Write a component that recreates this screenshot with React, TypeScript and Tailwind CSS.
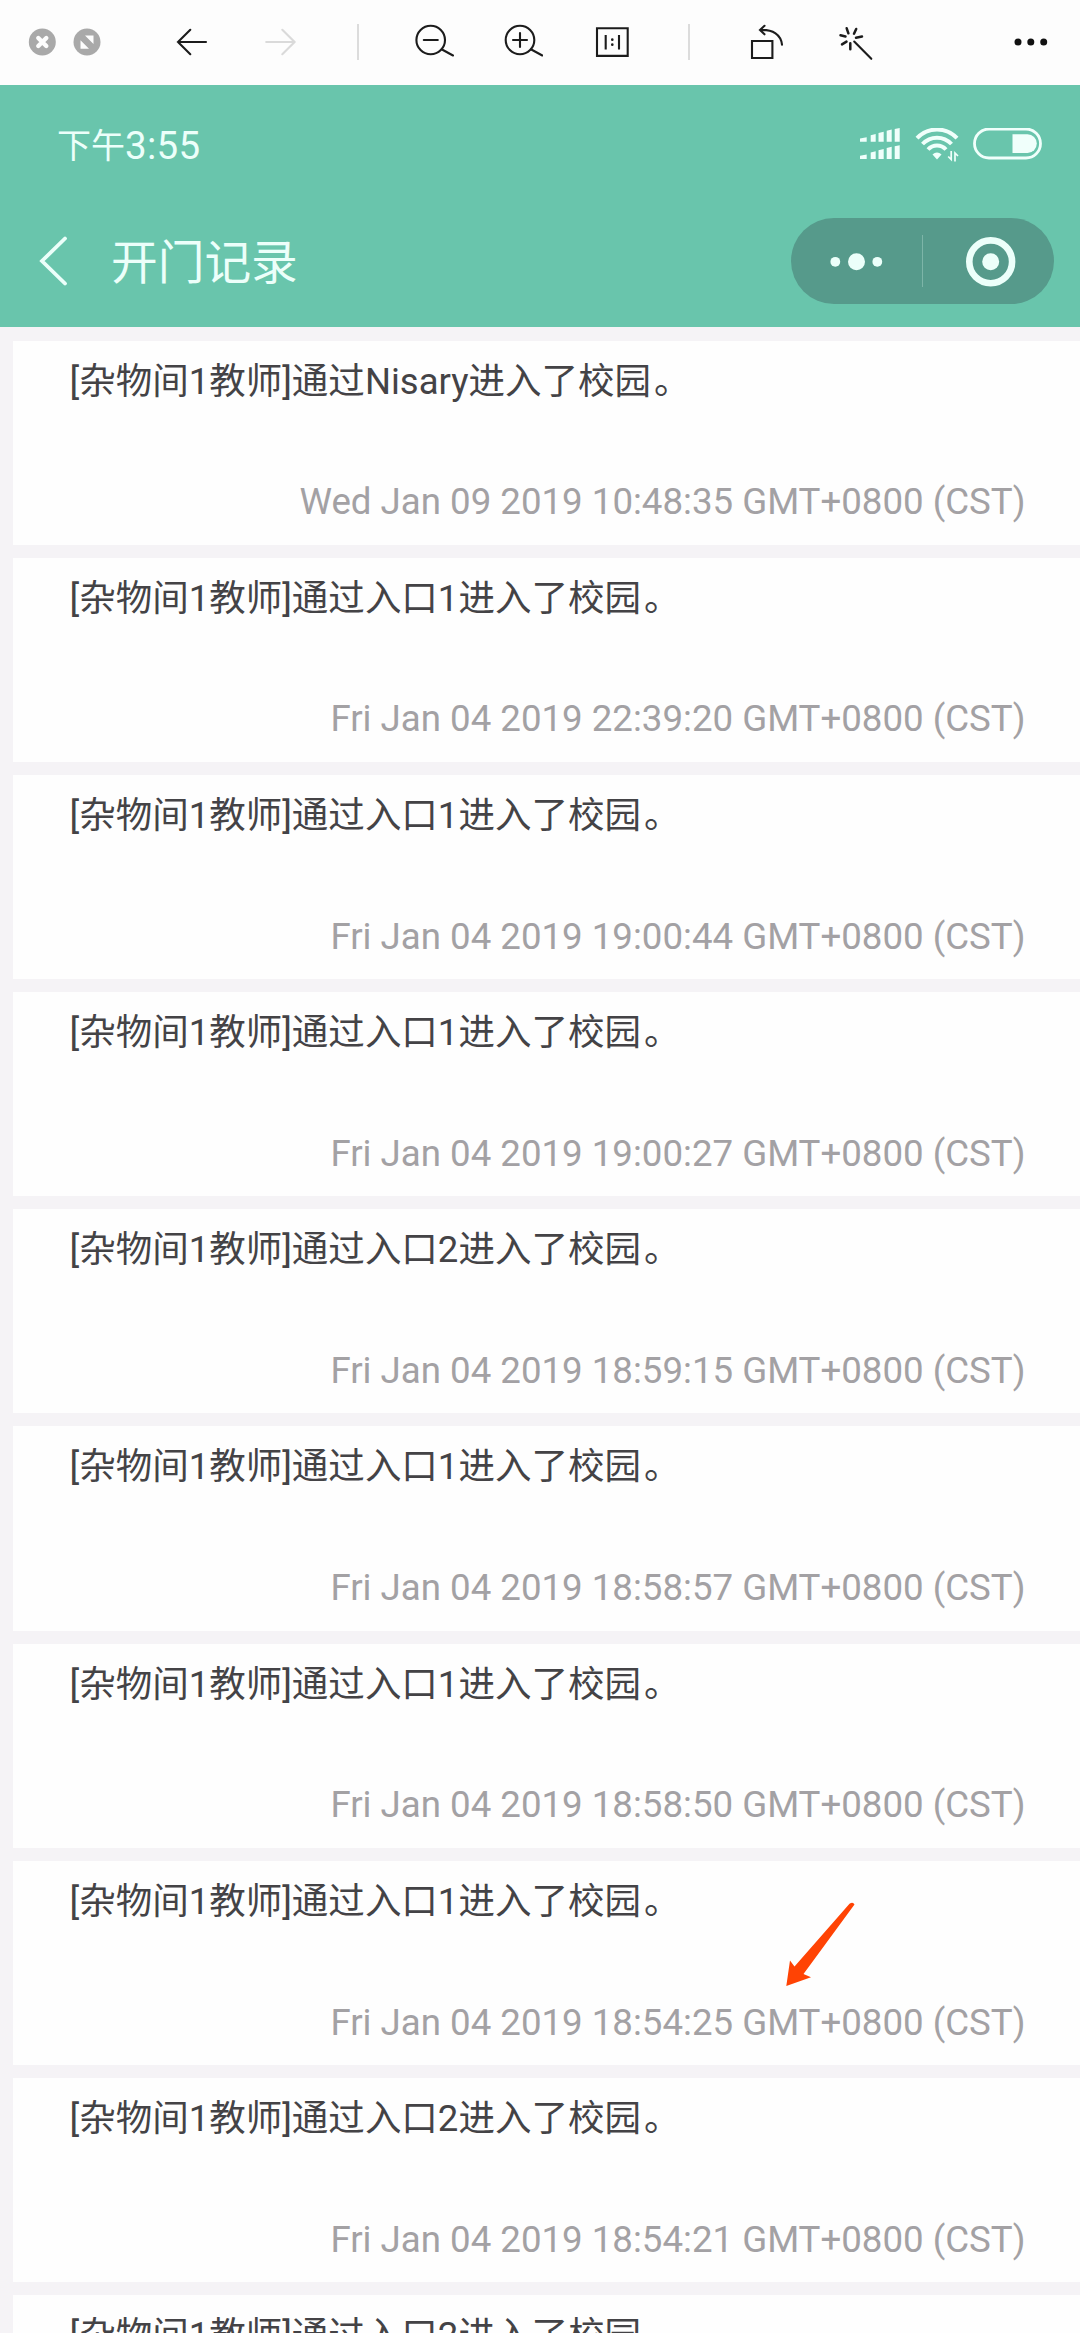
import type { ReactNode } from "react";

type OpenRecord = {
   door: string;
   time: string;
   marked?: boolean;
};

const records: OpenRecord[] = [
   { door: "Nisary", time: "Wed Jan 09 2019 10:48:35" },
   { door: "入口1", time: "Fri Jan 04 2019 22:39:20" },
   { door: "入口1", time: "Fri Jan 04 2019 19:00:44" },
   { door: "入口1", time: "Fri Jan 04 2019 19:00:27" },
   { door: "入口2", time: "Fri Jan 04 2019 18:59:15" },
   { door: "入口1", time: "Fri Jan 04 2019 18:58:57" },
   { door: "入口1", time: "Fri Jan 04 2019 18:58:50" },
   { door: "入口1", time: "Fri Jan 04 2019 18:54:25", marked: true },
   { door: "入口2", time: "Fri Jan 04 2019 18:54:21" },
   { door: "入口2", time: "" },
];

function ToolIcon({ className, children }: { className?: string; children: ReactNode }) {
   return (
      <svg
         viewBox="0 0 40 40"
         className={`size-10 shrink-0 ${className ?? ""}`}
         fill="none"
         stroke="#1c1c1c"
         strokeWidth="2.1"
         strokeLinecap="round"
      >
         {children}
      </svg>
   );
}

function Toolbar() {
   return (
      <div className="flex h-[85px] items-start bg-[#fdfdfd] pt-[22px] pl-[22px]">
         <ToolIcon>
            <circle cx="20.3" cy="20" r="13.5" fill="#a9a9a9" stroke="none" />
            <path d="M16.3 16l8 8M24.3 16l-8 8" stroke="#fdfdfd" strokeWidth="4.4" />
         </ToolIcon>
         <ToolIcon className="ml-[5px]">
            <circle cx="20" cy="20" r="13.5" fill="#a9a9a9" stroke="none" />
            <path d="M18 13.5h8.5V22zM13.5 18.2V26.7H22z" fill="#fdfdfd" stroke="none" />
         </ToolIcon>
         <ToolIcon className="ml-[65px]">
            <path d="M18.3 7.8L6 20l12.3 12.2M6 20h28" />
         </ToolIcon>
         <ToolIcon className="ml-12">
            <path d="M22.3 7.8L34.6 20L22.3 32.2M34.6 20H6.2" stroke="#dadada" />
         </ToolIcon>
         <div className="mt-0.5 ml-[57px] h-9 w-0.5 bg-[#dcdcdc]" />
         <ToolIcon className="ml-[55px]">
            <circle cx="16.7" cy="18" r="14.3" />
            <path d="M28 27.5l11 6M9.8 18h14" />
         </ToolIcon>
         <ToolIcon className="ml-[49px]">
            <circle cx="17" cy="18" r="14.3" />
            <path d="M28.3 27.5l11 6M10 18h14M17 11v14" />
         </ToolIcon>
         <ToolIcon className="ml-[49px]">
            <path d="M5 6.3h30.7v27.6H5zM13.7 13v14.5M27 13v14.5" strokeLinecap="butt" />
            <path d="M20.3 17.6v.1M20.3 22.6v.1" strokeWidth="2.6" />
         </ToolIcon>
         <div className="mt-0.5 ml-14 h-9 w-0.5 bg-[#dcdcdc]" />
         <ToolIcon className="ml-[56px]">
            <path d="M6 19h20.4v17H6z" strokeLinecap="butt" />
            <path d="M18.5 3.8L14 8l4.5 4.3M14 8c13-.8 21 5 22 14.7" />
         </ToolIcon>
         <ToolIcon className="ml-[49px]">
            <path
               d="M11.7 6.3l1.7 5M21.2 7l-2.2 4.7M27 14.5l-6 1.2M15.3 21.3v6M11.5 19.6l-4.5 2.8M10.5 14.5l-5-1.2"
               strokeWidth="2.5"
            />
            <path d="M19.2 19.5L36.3 36.8" />
         </ToolIcon>
         <ToolIcon className="ml-[136px]">
            <g fill="#111" stroke="none">
               <circle cx="7" cy="20" r="3.5" />
               <circle cx="19.8" cy="20" r="3.5" />
               <circle cx="32.7" cy="20" r="3.5" />
            </g>
         </ToolIcon>
      </div>
   );
}

function StatusIcons() {
   return (
      <div className="flex items-start text-[#f0fffb]">
         <svg viewBox="0 0 41 32" className="h-8 w-[41px]" fill="currentColor">
            <path d="M0 10.5L6.7 9.3V13.7H0zM10.7 7.2L15.7 6V13.7h-5zM18.5 5L23.7 3.8V13.7h-5.2zM26.7 2.8L31.7 1.5V13.7h-5zM34.7 1L39.7 0V13.7h-5z" />
            <path d="M0 27.8L6.7 26.6V31H0zM10.7 24.5L15.7 23.3V31h-5zM18.5 22.3L23.7 21.1V31h-5.2zM26.7 20.1L31.7 18.8V31h-5zM34.7 18.3L39.7 17.3V31h-5z" />
         </svg>
         <svg viewBox="0 0 44 36" className="ml-[14px] h-9 w-11" fill="none" stroke="currentColor">
            <path d="M2 10.2C13-1.4 31-1.4 42 10.2" strokeWidth="4" />
            <path d="M7.5 16c8-8.5 21-8.5 29 0" strokeWidth="4" />
            <path d="M13 21.5c5-5.3 13-5.3 18 0" strokeWidth="4" />
            <path d="M17.5 26.5c2.7-2.7 6.3-2.7 9 0L22 31.5z" fill="currentColor" stroke="none" />
            <path d="M36.2 23v8.5l-3-3M40 33.5V25l3 3" strokeWidth="1.7" />
         </svg>
         <svg viewBox="0 0 69 32" className="ml-[14px] h-8 w-[69px]" fill="none" stroke="currentColor">
            <rect x="1.5" y="1" width="66" height="29" rx="14.5" strokeWidth="2.8" />
            <path d="M39.5 6.3h15a9.3 9.3 0 0 1 0 18.6h-15z" fill="currentColor" stroke="none" />
         </svg>
      </div>
   );
}

function Header() {
   return (
      <header className="h-[242px] bg-[#69c5ac] text-[#ecfffa]">
         <div className="flex h-[121px] justify-between pt-[43px] pr-[38px] pl-[57px]">
            <div className="flex h-9 items-center leading-9">
               <span className="text-[34px]">下午</span>
               <span className="text-[38.5px] tracking-[0.3px]">3:55</span>
            </div>
            <StatusIcons />
         </div>
         <div className="flex h-[110px] items-center pr-[26px] pl-[37px]">
            <svg viewBox="0 0 32 50" className="h-[50px] w-8" fill="none" stroke="currentColor" strokeWidth="3.8">
               <path d="M28 2.5L5 25l23 22.5" strokeLinecap="round" />
            </svg>
            <h1 className="mt-[3px] ml-[42px] text-[46.7px] leading-[50px]">开门记录</h1>
            <div className="ml-auto flex h-[86px] w-[263px] items-center rounded-full bg-[#569a8b]">
               <svg viewBox="0 0 131 86" className="h-[86px] w-[131px]" fill="currentColor">
                  <circle cx="44.3" cy="43.8" r="4.9" />
                  <circle cx="65.5" cy="43.8" r="8.5" />
                  <circle cx="86.3" cy="43.8" r="4.9" />
               </svg>
               <div className="h-[52px] w-px bg-[#7db5a8]" />
               <svg viewBox="0 0 131 86" className="h-[86px] w-[131px]" fill="currentColor">
                  <circle cx="67.7" cy="43.8" r="21.4" fill="none" stroke="currentColor" strokeWidth="6.6" />
                  <circle cx="67.7" cy="43.8" r="8.5" />
               </svg>
            </div>
         </div>
      </header>
   );
}

function RecordCard({ door, time, marked }: OpenRecord) {
   return (
      <li className="relative flex h-[204.2px] shrink-0 flex-col justify-between bg-[#fefefe] pt-[15px] pr-[54.5px] pb-[16.5px] pl-[56.5px]">
         <p className="text-[36.5px] leading-[52px] whitespace-nowrap text-[#444346]">
            [杂物间1教师]通过{door}进入了校园<span className="ml-[3px]">。</span>
         </p>
         {time && (
            <p className="self-end text-[36.65px] leading-[52px] whitespace-nowrap text-[#a3a1a4]">
               {time} GMT+0800 (CST)
            </p>
         )}
         {marked && (
            <svg viewBox="0 0 70 85" className="absolute top-[41px] left-[773px] h-[85px] w-[70px]" fill="#ff4304">
               <path d="M0.3 84L4 58.5L8.5 64.5L63.5 1.8Q67-.5 68.5 2.5L17.5 72L25 75.3z" />
            </svg>
         )}
      </li>
   );
}

export default function App() {
   return (
      <div className="flex h-[2333px] w-[1080px] flex-col overflow-hidden bg-[#f5f3f6] font-[Roboto,'Noto_Sans_CJK_SC',sans-serif]">
         <Toolbar />
         <Header />
         <ul className="flex flex-1 flex-col gap-[13px] overflow-hidden pt-[13.5px] pl-[13px]">
            {records.map((record, index) => (
               <RecordCard key={index} {...record} />
            ))}
         </ul>
      </div>
   );
}
